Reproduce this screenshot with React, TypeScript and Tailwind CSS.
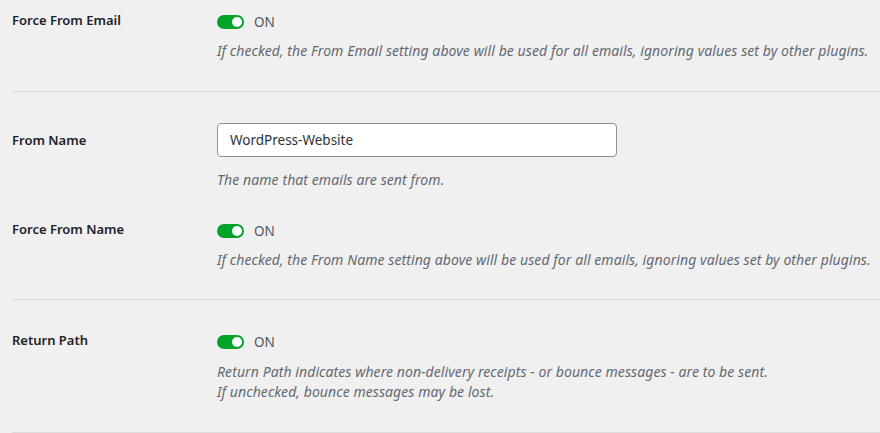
import { useState } from 'react';

const font = { fontFamily: '"Noto Sans", "Open Sans", sans-serif' };

function Toggle({ on }: { on: boolean }) {
  return (
    <div className="flex items-center h-5 mt-[2px]">
      <span
        className={`relative inline-flex w-[27px] h-[14px] rounded-full ${on ? 'bg-[#00a32a]' : 'bg-[#8c8f94]'}`}
      >
        <span className={`absolute top-[2px] w-[10px] h-[10px] rounded-full bg-white ${on ? 'left-[15px]' : 'left-[2px]'}`} />
      </span>
      <span className="ml-[10px] text-[13.5px] text-[#50575e]">{on ? 'ON' : 'OFF'}</span>
    </div>
  );
}

function Label({ children }: { children: React.ReactNode }) {
  return (
    <div className="w-[205px] shrink-0 text-[13px] leading-5 font-semibold text-[#1d2327]">{children}</div>
  );
}

function Desc({ children, className = '' }: { children: React.ReactNode; className?: string }) {
  return <p className={`text-[14px] leading-5 italic tracking-[0.08px] text-[#646970] ${className}`}>{children}</p>;
}

export default function App() {
  const [fromName, setFromName] = useState('WordPress-Website');

  return (
    <div className="min-h-screen bg-[#f0f0f1] pl-[12px] overflow-hidden" style={font}>
      {/* Force From Email */}
      <div className="flex pt-[10px] pb-[30px] border-b border-[#dcdcde]">
        <Label>Force From Email</Label>
        <div>
          <Toggle on />
          <Desc className="mt-[9px] whitespace-nowrap">
            If checked, the From Email setting above will be used for all emails, ignoring values set by other plugins.
          </Desc>
        </div>
      </div>

      {/* From Name / Force From Name */}
      <div className="pt-[31px] pb-[29px] border-b border-[#dcdcde]">
        <div className="flex items-start">
          <div className="h-[34px] flex items-center">
            <Label>From Name</Label>
          </div>
          <div>
            <input
              value={fromName}
              onChange={e => setFromName(e.target.value)}
              className="w-[400px] h-[34px] px-[12px] bg-white border border-[#8c8f94] rounded-[4px] text-[13.5px] text-[#2c3338] outline-none"
              style={font}
            />
            <Desc className="mt-[13px]">The name that emails are sent from.</Desc>
          </div>
        </div>
        <div className="flex mt-[29px]">
          <Label>Force From Name</Label>
          <div>
            <Toggle on />
            <Desc className="mt-[9px] whitespace-nowrap">
              If checked, the From Name setting above will be used for all emails, ignoring values set by other plugins.
            </Desc>
          </div>
        </div>
      </div>

      {/* Return Path */}
      <div className="flex pt-[30px] pb-[30px] border-b border-[#dcdcde]">
        <Label>Return Path</Label>
        <div>
          <Toggle on />
          <Desc className="mt-[10px]">
            Return Path indicates where non-delivery receipts - or bounce messages - are to be sent.
            <br />
            If unchecked, bounce messages may be lost.
          </Desc>
        </div>
      </div>
    </div>
  );
}
